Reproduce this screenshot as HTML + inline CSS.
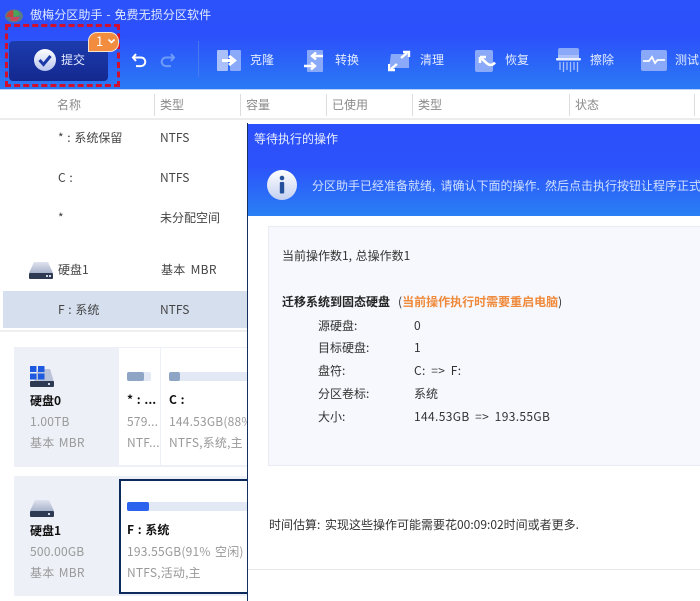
<!DOCTYPE html>
<html lang="zh"><head><meta charset="utf-8"><style>
html,body{margin:0;padding:0;background:#fff}
#p{position:relative;width:700px;height:601px;overflow:hidden;background:#fff;font-family:"Noto Sans CJK SC","Liberation Sans",sans-serif;font-size:12px;color:#333;filter:blur(.35px);word-spacing:1px}
#p div,#p span.t,#p svg{position:absolute}
.t{position:absolute;white-space:nowrap;line-height:16px}
.w{color:#e4ecff;font-size:12px}
.h{color:#8a8a8a;font-size:12px}
.b{color:#444;font-size:12px}
.s{color:#999;font-size:12px;letter-spacing:.2px;word-spacing:1.5px}
.k{color:#111;font-weight:bold;font-size:12px}
.d{color:#333;font-size:12px}
.v{letter-spacing:.35px;word-spacing:2.5px}
</style></head><body><div id="p">
<div style="left:0;top:0;width:700px;height:89px;background:linear-gradient(#2c52fb 0,#2c50fb 40%,#2a7af4 100%)"></div>

<svg style="left:4px;top:6px" width="20" height="18" viewBox="0 0 20 18"><ellipse cx="10" cy="10" rx="9" ry="6.5" fill="#5a7a8a"/><path d="M2 11C4 5 8 3 10 5L9 11Z" fill="#c0453f"/><path d="M9 5C12 3 15 5 16 9L10 11Z" fill="#4aa45a"/><path d="M6 11h10l-3 4H7Z" fill="#c9455e"/></svg>
<span class="t" style="left:30px;top:7px;color:#dfe8ff;font-size:12px;letter-spacing:.1px">傲梅分区助手 - 免费无损分区软件</span>

<div style="left:9px;top:41px;width:99px;height:40px;border-radius:4px;background:linear-gradient(#1c3cae,#14288f)"></div>
<div style="left:5px;top:24px;width:115px;height:63px;box-sizing:border-box;border:3px dashed #d10f2e"></div>
<svg style="left:33px;top:48px" width="24" height="24" viewBox="0 0 24 24"><defs><linearGradient id="g" x1="0" y1="0" x2="0" y2="1"><stop offset="0" stop-color="#fff"/><stop offset="1" stop-color="#b9c6ee"/></linearGradient></defs><circle cx="12" cy="12" r="11" fill="url(#g)"/><path d="M6.5 12l4 4.5 7-8.5" fill="none" stroke="#1c3aa8" stroke-width="3"/></svg>
<span class="t" style="left:61px;top:52px;color:#e4ecff">提交</span>
<div style="left:88px;top:32px;width:31px;height:20px;background:#f28c3e;border-radius:9px 9px 9px 0;border:1px solid #f6e3d0;box-sizing:border-box"></div>
<span class="t" style="left:96px;top:33px;color:#fff;font-size:13px">1</span>
<svg style="left:107px;top:38px" width="9" height="7" viewBox="0 0 9 7"><path d="M1.5 1.5l3 3 3-3" fill="none" stroke="#fff" stroke-width="1.6"/></svg>

<svg style="left:131px;top:52px" width="18" height="17" viewBox="0 0 18 17"><path d="M5 2L2 5.500l3 3.500M2.500 5.500H10a4.300 4.300 0 0 1 0 8.600H5" fill="none" stroke="#fff" stroke-width="2"/></svg>
<svg style="left:158px;top:52px" width="18" height="17" viewBox="0 0 18 17"><path d="M13 2l3 3.500-3 3.500M15.500 5.500H8a4.300 4.300 0 0 0 0 8.600h5" fill="none" stroke="#6f9bf8" stroke-width="2"/></svg>
<div style="left:198px;top:41px;width:1px;height:36px;background:#4a78f0"></div>

<svg style="left:217px;top:50px" width="25" height="21" viewBox="0 0 25 21"><rect x="0" y="0" width="11" height="21" rx="1" fill="#a9c0fa"/><rect x="13" y="0" width="11" height="21" rx="1" fill="#8aa9f8"/><path d="M5 10.500h10M12 6l5.500 4.500L12 15" fill="none" stroke="#fff" stroke-width="3"/></svg>
<span class="t w" style="left:250px;top:52px">克隆</span>

<svg style="left:304px;top:49px" width="20" height="24" viewBox="0 0 20 24"><rect x="3" y="1" width="16" height="22" rx="1" fill="#8aa9f8"/><path d="M19 7H9M12 3.500L8 7l4 3.500M0 17h10M7 13.500L11 17l-4 3.500" fill="none" stroke="#fff" stroke-width="2.400"/></svg>
<span class="t w" style="left:335px;top:52px">转换</span>

<svg style="left:388px;top:50px" width="23" height="22" viewBox="0 0 23 22"><path d="M3 4h18v14H1Z" fill="#8aa9f8"/><path d="M13 8l6-5M15 2h6v5M9 14l-6 5M1 14v6h6" fill="none" stroke="#fff" stroke-width="2.400"/></svg>
<span class="t w" style="left:420px;top:52px">清理</span>

<svg style="left:475px;top:49px" width="22" height="23" viewBox="0 0 22 23"><rect x="0" y="1" width="18" height="22" rx="2" fill="#8aa9f8"/><path d="M5 8v6M5 8h6M5.500 8.500L12 14.500c2.500 2 5.500 2 8-1" fill="none" stroke="#fff" stroke-width="2.600"/></svg>
<span class="t w" style="left:505px;top:52px">恢复</span>

<svg style="left:556px;top:48px" width="26" height="25" viewBox="0 0 26 25"><rect x="2" y="0" width="21" height="10" rx="2" fill="#8aa9f8"/><rect x="2" y="7" width="21" height="4" fill="#a9c0fa"/><rect x="0" y="10" width="25" height="2.500" rx="1" fill="#eaf0ff"/><path d="M4 14v8M7.500 14v10M11 14v8M14.500 14v10M18 14v8M21.500 14v10" stroke="#a9c0fa" stroke-width="1.300"/></svg>
<span class="t w" style="left:590px;top:52px">擦除</span>

<svg style="left:641px;top:50px" width="26" height="21" viewBox="0 0 26 21"><rect width="26" height="21" rx="2" fill="#8aa9f8"/><path d="M2 11h6l3-4 3 6 2.500-3H24" fill="none" stroke="#fff" stroke-width="1.800"/></svg>
<span class="t w" style="left:675px;top:52px">测试</span>

<div style="left:0;top:89px;width:700px;height:1px;background:#bcd0f8"></div>
<div style="left:0;top:118px;width:700px;height:2px;background:#ececec"></div>
<span class="t h" style="left:57px;top:97px">名称</span>
<div style="left:154px;top:94px;width:1px;height:22px;background:#ddd"></div>
<span class="t h" style="left:160px;top:97px">类型</span>
<div style="left:240px;top:94px;width:1px;height:22px;background:#ddd"></div>
<span class="t h" style="left:246px;top:97px">容量</span>
<div style="left:326px;top:94px;width:1px;height:22px;background:#ddd"></div>
<span class="t h" style="left:332px;top:97px">已使用</span>
<div style="left:412px;top:94px;width:1px;height:22px;background:#ddd"></div>
<span class="t h" style="left:418px;top:97px">类型</span>
<div style="left:569px;top:94px;width:1px;height:22px;background:#ddd"></div>
<span class="t h" style="left:575px;top:97px">状态</span>
<div style="left:694px;top:94px;width:1px;height:22px;background:#ddd"></div>

<span class="t b" style="left:58px;top:130px">* : 系统保留</span>
<span class="t b" style="left:160px;top:130px">NTFS</span>
<span class="t b" style="left:58px;top:170px">C :</span>
<span class="t b" style="left:160px;top:170px">NTFS</span>
<span class="t b" style="left:58px;top:210px">*</span>
<span class="t b" style="left:160px;top:210px">未分配空间</span>

<svg style="left:29px;top:261px" width="25" height="18" viewBox="0 0 25 18"><defs><linearGradient id="d" x1="0" y1="0" x2="0" y2="1"><stop offset="0" stop-color="#dfe3ee"/><stop offset="1" stop-color="#a9b3cc"/></linearGradient></defs><path d="M5 1h14l5 11H0Z" fill="url(#d)"/><rect x="0" y="12" width="24" height="6" rx="1" fill="#2e3a52"/><rect x="17" y="14" width="2" height="2" fill="#cfd6e6"/><rect x="20" y="14" width="2" height="2" fill="#cfd6e6"/></svg>
<span class="t b" style="left:58px;top:262px">硬盘1</span>
<span class="t b" style="left:161px;top:262px;letter-spacing:.3px;word-spacing:2px">基本 MBR</span>
<div style="left:3px;top:291px;width:244px;height:37px;background:#d5dfee"></div>
<span class="t b" style="left:58px;top:302px">F : 系统</span>
<span class="t b" style="left:160px;top:302px">NTFS</span>
<div style="left:0;top:330px;width:247px;height:2px;background:#efefef"></div>

<div style="left:14px;top:347px;width:233px;height:120px;background:#edf0f6"></div>
<div style="left:119px;top:348px;width:41px;height:117px;background:#fff"></div>
<div style="left:161px;top:348px;width:86px;height:117px;background:#fff"></div>
<svg style="left:30px;top:366px" width="25" height="22" viewBox="0 0 25 22"><path d="M8 3h12l4 13H4Z" fill="#b9c2d8"/><rect x="0" y="15" width="24" height="6" rx="1" fill="#2e3a52"/><rect x="18" y="17" width="2" height="2" fill="#cfd6e6"/><rect x="0" y="0" width="6.500" height="6" fill="#1e5ae0"/><rect x="8" y="0" width="6.500" height="6" fill="#1e5ae0"/><rect x="0" y="7.500" width="6.500" height="6" fill="#1e5ae0"/><rect x="8" y="7.500" width="6.500" height="6" fill="#1e5ae0"/></svg>
<span class="t k" style="left:30px;top:393px">硬盘0</span>
<span class="t s" style="left:30px;top:414px">1.00TB</span>
<span class="t s" style="left:30px;top:435px">基本 MBR</span>
<div style="left:127px;top:372px;width:24px;height:9px;background:#e2e9f5;border-radius:2px"></div>
<div style="left:127px;top:372px;width:17px;height:9px;background:#8fa5c6;border-radius:2px"></div>
<span class="t k" style="left:127px;top:392px">* : ...</span>
<span class="t s" style="left:127px;top:414px">579...</span>
<span class="t s" style="left:127px;top:435px">NTF...</span>
<div style="left:169px;top:372px;width:78px;height:9px;background:#e2e9f5;border-radius:2px 0 0 2px"></div>
<div style="left:169px;top:372px;width:11px;height:9px;background:#8fa5c6;border-radius:2px"></div>
<span class="t k" style="left:169px;top:392px">C :</span>
<span class="t s" style="left:169px;top:414px;width:78px;overflow:hidden">144.53GB(88%</span>
<span class="t s" style="left:169px;top:435px">NTFS,系统,主</span>

<div style="left:14px;top:476px;width:233px;height:120px;background:#edf0f6"></div>
<div style="left:119px;top:479px;width:128px;height:115px;box-sizing:border-box;background:#fff;border:2px solid #0d2a5c;border-right:0"></div>
<svg style="left:30px;top:499px" width="25" height="18" viewBox="0 0 25 18"><path d="M5 1h14l5 11H0Z" fill="url(#d)"/><rect x="0" y="12" width="24" height="6" rx="1" fill="#2e3a52"/><rect x="18" y="14" width="2" height="2" fill="#cfd6e6"/></svg>
<span class="t k" style="left:30px;top:523px">硬盘1</span>
<span class="t s" style="left:30px;top:544px">500.00GB</span>
<span class="t s" style="left:30px;top:565px">基本 MBR</span>
<div style="left:127px;top:502px;width:120px;height:9px;background:#e2e9f5;border-radius:2px 0 0 2px"></div>
<div style="left:127px;top:502px;width:22px;height:9px;background:#2b62ee;border-radius:2px"></div>
<span class="t k" style="left:127px;top:522px">F : 系统</span>
<span class="t s" style="left:127px;top:544px">193.55GB(91% 空闲)</span>
<span class="t s" style="left:127px;top:565px">NTFS,活动,主</span>

<div style="left:247px;top:123px;width:453px;height:478px;background:#fff;border-left:1px solid #14305f;box-sizing:border-box"></div>
<div style="left:248px;top:124px;width:452px;height:92px;background:linear-gradient(#2c50fb 0,#2c52fb 45%,#2a80f4 100%)"></div>
<span class="t" style="left:254px;top:131px;color:#e8eeff;font-size:12px">等待执行的操作</span>
<svg style="left:267px;top:170px" width="30" height="30" viewBox="0 0 30 30"><defs><linearGradient id="i" x1="0" y1="0" x2="0" y2="1"><stop offset="0" stop-color="#fff"/><stop offset="1" stop-color="#c3d0f0"/></linearGradient></defs><circle cx="15" cy="15" r="15" fill="url(#i)"/><circle cx="15" cy="8" r="2.300" fill="#24509c"/><rect x="12.800" y="12" width="4.400" height="11.500" rx="1" fill="#24509c"/></svg>
<span class="t" style="left:312px;top:178px;color:#cfe0ff;font-size:12px;word-spacing:2.500px">分区助手已经准备就绪, 请确认下面的操作. 然后点击执行按钮让程序正式执行</span>

<div style="left:268px;top:226px;width:440px;height:240px;box-sizing:border-box;background:#f6f8fd;border:1px solid #e9ecf2"></div>
<span class="t d" style="left:282px;top:248px">当前操作数1, 总操作数1</span>
<span class="t" style="left:282px;top:294px;font-size:12px;color:#222;font-weight:bold">迁移系统到固态硬盘</span>
<span class="t" style="left:398px;top:294px;font-size:12px;color:#333">(<span style="color:#ef8a3c;font-weight:bold">当前操作执行时需要重启电脑</span>)</span>
<span class="t d" style="left:318px;top:318px">源硬盘:</span><span class="t d" style="left:414px;top:318px">0</span>
<span class="t d" style="left:318px;top:340px">目标硬盘:</span><span class="t d" style="left:414px;top:340px">1</span>
<span class="t d" style="left:318px;top:363px">盘符:</span><span class="t d v" style="left:414px;top:363px">C: =&gt; F:</span>
<span class="t d" style="left:318px;top:386px">分区卷标:</span><span class="t d" style="left:414px;top:386px">系统</span>
<span class="t d" style="left:318px;top:409px">大小:</span><span class="t d v" style="left:414px;top:409px">144.53GB =&gt; 193.55GB</span>
<span class="t d" style="left:269px;top:517px;word-spacing:2px">时间估算: 实现这些操作可能需要花00:09:02时间或者更多.</span>
<div style="left:248px;top:569px;width:452px;height:1px;background:#e8e8e8"></div>
</div></body></html>
